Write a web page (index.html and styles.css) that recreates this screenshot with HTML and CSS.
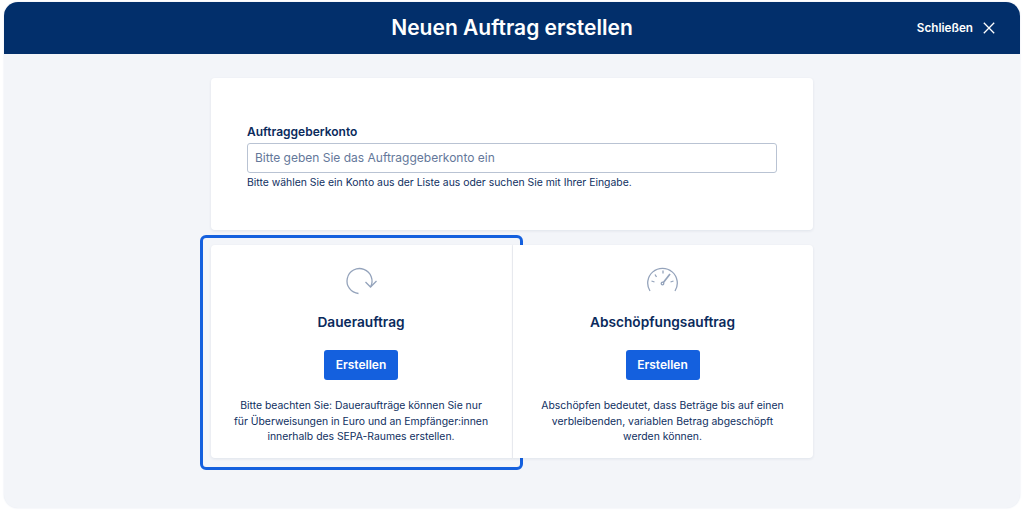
FILE: index.html
```html
<!DOCTYPE html>
<html lang="de">
<head>
<meta charset="utf-8">
<title>Neuen Auftrag erstellen</title>
<link rel="stylesheet" href="styles.css">
</head>
<body>
<div class="window">
  <header class="header">
    <h1 class="title">Neuen Auftrag erstellen</h1>
    <button class="close">Schließen
      <svg class="close-icon" viewBox="0 0 12 12"><path d="M.8.8l10.4 10.4M11.2.8L.8 11.2"/></svg>
    </button>
  </header>
  <main class="content">
    <section class="card account">
      <label class="label">Auftraggeberkonto</label>
      <div class="input">Bitte geben Sie das Auftraggeberkonto ein</div>
      <p class="hint">Bitte wählen Sie ein Konto aus der Liste aus oder suchen Sie mit Ihrer Eingabe.</p>
    </section>
    <div class="options">
      <section class="card option">
        <svg class="icon" viewBox="0 0 32 32"><path d="M13.500 27.500A12.500 12.500 0 1 1 25.500 21"/><path d="M20.500 16l5 5 6-6"/></svg>
        <h2 class="option-title">Dauerauftrag</h2>
        <button class="primary">Erstellen</button>
        <p class="text">Bitte beachten Sie: Daueraufträge können Sie nur für Überweisungen in Euro und an Empfänger:innen innerhalb des SEPA-Raumes erstellen.</p>
        <div class="highlight"></div>
      </section>
      <section class="card option">
        <svg class="icon" viewBox="0 0 32 32"><path d="M3 25A14.800 14.800 0 1 1 28 25"/><path d="M16 4.500v3M4.500 15l3 1M26.500 15l-3 1M8 8.500l1.500 2.500"/><path class="needle" d="M16 17l7-9"/><circle cx="15.500" cy="17.500" r="1.300"/></svg>
        <h2 class="option-title">Abschöpfungsauftrag</h2>
        <button class="primary">Erstellen</button>
        <p class="text">Abschöpfen bedeutet, dass Beträge bis auf einen verbleibenden, variablen Betrag abgeschöpft werden können.</p>
      </section>
    </div>
  </main>
</div>
</body>
</html>
```

FILE: styles.css
```css
* { box-sizing: border-box; }
html, body { margin: 0; height: 100%; background: #fff; }
body { padding: 2px 4px 3px 4px; font-family: Inter, "Liberation Sans", sans-serif; color: #0a2a5c; overflow: hidden; }
.window { height: 506px; width: 1016px; border-radius: 14px; background: #f3f5f9; overflow: hidden; box-shadow: 0 0 2px #dfe4ee; display: flex; flex-direction: column; }
.header { height: 52px; flex: none; background: #022f6b; display: flex; align-items: center; justify-content: center; position: relative; }
.title { margin: 0; color: #fff; font-size: 21px; line-height: 28px; font-weight: 600; }
.close { position: absolute; right: 25px; top: 15px; display: flex; align-items: center; gap: 10px; padding: 0; border: 0; background: none; color: #fff; font: 600 11.700px/22px Inter, "Liberation Sans", sans-serif; }
.close-icon { width: 12px; height: 12px; fill: none; stroke: #fff; stroke-width: 1.300; }
.content { width: 602px; margin: 24px auto 0; display: flex; flex-direction: column; gap: 15px; }
.card { background: #fff; border-radius: 4px; box-shadow: 0 1px 3px rgba(30, 50, 90, .09); }
.account { height: 152px; padding: 45px 36px 0; display: flex; flex-direction: column; }
.label { font-size: 12px; line-height: 18px; font-weight: 600; color: #0a2a5c; }
.input { margin-top: 2px; width: 530px; height: 30px; border: 1px solid #b9c3d3; border-radius: 3px; padding: 0 7px; font-size: 12px; line-height: 28px; color: #64789a; }
.hint { margin: 2px 0 0; font-size: 10.400px; line-height: 16px; color: #0f2f5f; }
.options { display: grid; grid-template-columns: 302px 300px; }
.option { height: 213px; padding: 21px 22px 0; display: flex; flex-direction: column; align-items: center; position: relative; }
.option:first-child { padding-right: 23px; border-right: 1px solid #eef0f4; border-radius: 4px 0 0 4px; }
.option:last-child { padding-left: 21px; border-radius: 0 4px 4px 0; }
.icon { width: 32px; height: 32px; fill: none; stroke: #94a3bb; stroke-width: 1.300; }
.needle { stroke-width: 1.700; }
.option-title { margin: 14px 0 0; font-size: 13.700px; line-height: 20px; font-weight: 600; color: #0a2a5c; }
.primary { margin-top: 17.500px; width: 74px; height: 30px; border: 0; border-radius: 3px; background: #1460de; color: #fff; padding: 0; font: 600 12px/30px Inter, "Liberation Sans", sans-serif; }
.text { margin: 18.500px 0 0; font-size: 10.400px; line-height: 15.500px; text-align: center; color: #0f2f5f; }
.highlight { position: absolute; left: -11px; top: -10px; width: 323px; height: 235px; border: 3px solid #1460de; border-radius: 6px; }
```
